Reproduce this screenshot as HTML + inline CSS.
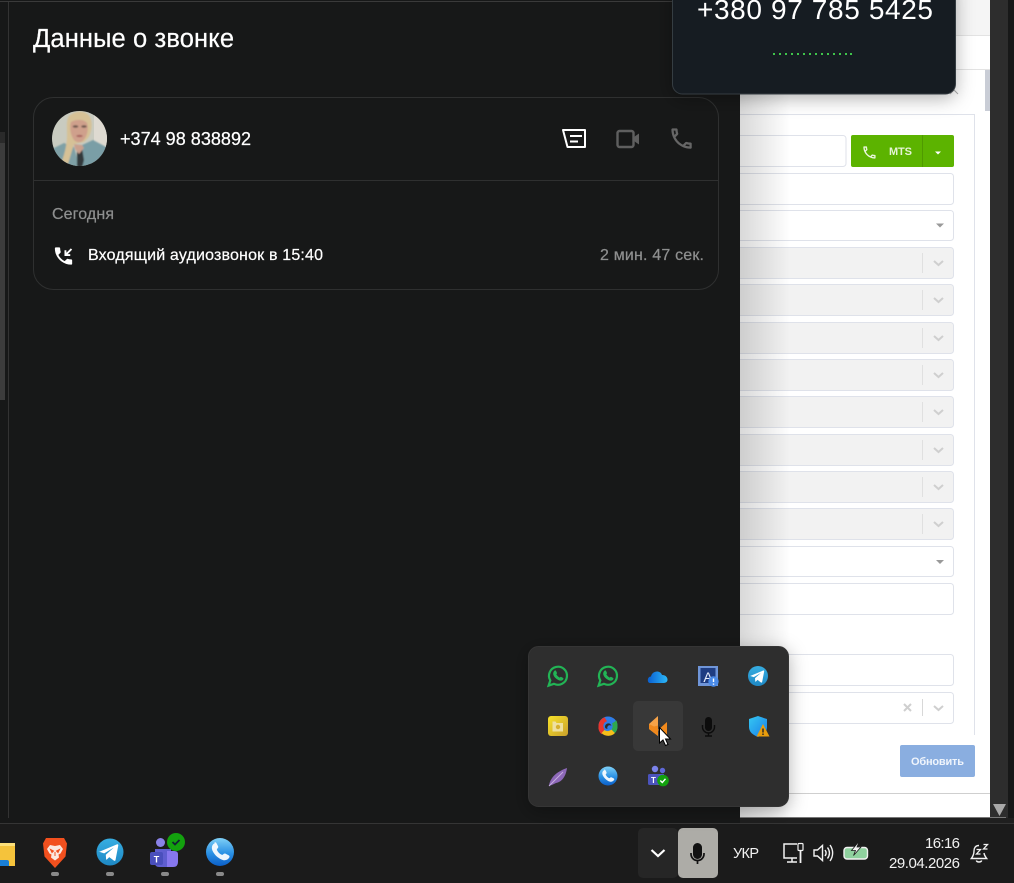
<!DOCTYPE html>
<html lang="ru"><head><meta charset="utf-8"><title>Данные о звонке</title>
<style>html,body{margin:0;padding:0;background:#171818;overflow:hidden}svg{display:block}text{font-family:"Liberation Sans",sans-serif}.w{stroke-width:.22;paint-order:stroke}</style></head>
<body>
<svg xmlns="http://www.w3.org/2000/svg" width="1014" height="883" viewBox="0 0 1014 883">
<defs>
<linearGradient id="sh" x1="0" x2="1" y1="0" y2="0"><stop offset="0" stop-color="#000" stop-opacity=".15"/><stop offset="1" stop-color="#000" stop-opacity="0"/></linearGradient>
<linearGradient id="tg" x1="0" x2="0" y1="0" y2="1"><stop offset="0" stop-color="#37aee2"/><stop offset="1" stop-color="#1e88c4"/></linearGradient>
<linearGradient id="ph" x1="0" x2="0" y1="0" y2="1"><stop offset="0" stop-color="#7fd0f7"/><stop offset=".55" stop-color="#2a90e4"/><stop offset="1" stop-color="#0b5fc8"/></linearGradient>
<linearGradient id="od" x1="0" x2="1" y1="0" y2="0"><stop offset="0" stop-color="#0a5fd0"/><stop offset="1" stop-color="#2cb8f8"/></linearGradient>
<linearGradient id="sd" x1="0" x2="1" y1="0" y2="1"><stop offset="0" stop-color="#35c8f2"/><stop offset="1" stop-color="#1a7ee8"/></linearGradient>
<linearGradient id="yl" x1="0" x2="1" y1="0" y2="1"><stop offset="0" stop-color="#f7e22a"/><stop offset="1" stop-color="#c9a02c"/></linearGradient>
<clipPath id="av"><circle cx="79.500" cy="138.500" r="27.500"/></clipPath>
<filter id="b1" x="-10%" y="-10%" width="120%" height="120%"><feGaussianBlur stdDeviation=".9"/></filter>
<filter id="pop" x="-20%" y="-30%" width="140%" height="170%"><feDropShadow dx="0" dy="4" stdDeviation="9" flood-color="#000" flood-opacity=".3"/></filter>
<g id="wa"><path d="M-9.400 9.600l1.700-5.200A9 9 0 1 1-4 7.800z" fill="none" stroke="#22b455" stroke-width="2.200"/><path d="M-3.800-5c.9-.9 1.600-.7 2 .2l.7 1.500c.2.500 0 1-.6 1.600.8 1.500 1.800 2.500 3.400 3.300.6-.6 1.100-.9 1.600-.6l1.500.8c.8.400.9 1.100.2 1.900-1.100 1.200-2.800 1.300-4.900.2C-2.200 2.700-3.800 1-4.600-1c-.5-1.600-.1-3 .8-4z" fill="#22b455"/></g>
<g id="tgi"><path d="M-6.500-.3L5.600-5.400c.6-.2 1 .1.900.8L4.700 4.900c-.1.700-.6.800-1.100.5L.5 3.100-1 4.600c-.3.300-.6.200-.6-.2L-1.800 1.500 3.600-3.300-2.900.6-6.400-.6z" fill="#fff"/></g>
<g id="phi"><path d="M-4.600-6.300c.7-.5 1.300-.4 1.700.3l1 1.900c.3.600.1 1.100-.6 1.800-.2.200-.2.500 0 .9.700 1.300 1.500 2.100 2.800 2.800.4.200.7.200.9 0 .7-.7 1.200-.9 1.800-.6l1.900 1c.7.400.8 1 .3 1.700-1.300 1.800-3.400 2-5.900.5-2.200-1.300-3.600-2.800-4.600-4.800-1.100-2.300-.7-4.400 1.700-5.500z" fill="#fff" fill-opacity=".92"/></g>
</defs>

<!-- Right application -->
<rect x="740" y="0" width="250" height="818" fill="#fff"/>
<rect x="740" y="0" width="250" height="35" fill="#f5f5f5"/>
<path d="M740 35.500H990M740 69.500H990" stroke="#e3e3e3"/>
<path d="M740 114.500H974.500V735" stroke="#dfe2ea" fill="none"/>
<rect x="985" y="70" width="5" height="41" fill="#c9cdd6"/>
<path d="M950 94l4-4 4 4" stroke="#aaa" fill="none"/>
<g fill="#fff" stroke="#dfe2ea">
<rect x="730" y="135.500" width="116" height="31" rx="3"/>
<rect x="730" y="173.500" width="223.500" height="31" rx="3"/>
<rect x="730" y="210.500" width="223.500" height="30" rx="3"/>
<g fill="#f2f2f2">
<rect x="730" y="247.500" width="223.500" height="31" rx="3"/>
<rect x="730" y="284.500" width="223.500" height="31" rx="3"/>
<rect x="730" y="322.500" width="223.500" height="31" rx="3"/>
<rect x="730" y="359.500" width="223.500" height="31" rx="3"/>
<rect x="730" y="396.500" width="223.500" height="31" rx="3"/>
<rect x="730" y="434.500" width="223.500" height="31" rx="3"/>
<rect x="730" y="471.500" width="223.500" height="31" rx="3"/>
<rect x="730" y="508.500" width="223.500" height="31" rx="3"/>
</g>
<rect x="730" y="546.500" width="223.500" height="30" rx="3"/>
<rect x="730" y="583.500" width="223.500" height="31" rx="3"/>
<rect x="730" y="654.500" width="223.500" height="31" rx="3"/>
<rect x="730" y="692.500" width="223.500" height="31" rx="3"/>
</g>
<path d="M922.500 253v20M922.500 290v20M922.500 328v20M922.500 365v20M922.500 402v20M922.500 440v20M922.500 477v20M922.500 514v20" stroke="#e0e0e0"/>
<g stroke="#cfcfcf" stroke-width="2" fill="none">
<path d="M934 261l4.500 4 4.500-4M934 298l4.500 4 4.500-4M934 336l4.500 4 4.500-4M934 373l4.500 4 4.500-4M934 410l4.500 4 4.500-4M934 448l4.500 4 4.500-4M934 485l4.500 4 4.500-4M934 522l4.500 4 4.500-4M934 706l4.500 4 4.500-4"/>
<path d="M904 704l7 7m0-7l-7 7"/>
</g>
<path d="M922.500 699v17" stroke="#d8d8d8"/>
<path d="M936 223.500h8l-4 4zM936 560h8l-4 4z" fill="#999"/>
<rect x="851" y="135" width="103" height="32" rx="2" fill="#5cb300"/>
<path d="M922.500 135v32" stroke="#4f9a00"/>
<path transform="translate(861.300,144.300) scale(.68)" d="M6.540 5c.060.890.210 1.760.450 2.590l-1.200 1.200c-.410-1.200-.670-2.470-.760-3.790h1.510m9.860 12.020c.850.240 1.720.390 2.600.450v1.490c-1.320-.090-2.590-.350-3.800-.750l1.200-1.190M7.500 3H4c-.550 0-1 .450-1 1 0 9.390 7.610 17 17 17 .550 0 1-.450 1-1v-3.490c0-.550-.450-1-1-1-1.240 0-2.450-.200-3.570-.570-.100-.040-.210-.050-.310-.050-.260 0-.510.100-.710.290l-2.200 2.200c-2.830-1.450-5.150-3.760-6.590-6.590l2.200-2.200c.280-.280.360-.670.250-1.020C8.700 6.450 8.500 5.250 8.500 4c0-.550-.450-1-1-1z" fill="#eaf6dc"/>
<text x="889" y="155" font-size="11" font-weight="700" fill="#e6f4d6" textLength="23">MTS</text>
<path d="M935 151.500h6l-3 3z" fill="#fff"/>
<rect x="900" y="745" width="75" height="32" rx="2" fill="#8aaee0"/>
<text x="937.500" y="765" font-size="11" font-weight="700" fill="#f0f5fc" text-anchor="middle" textLength="53">Обновить</text>
<path d="M740 793.500H990" stroke="#cfcfcf"/>
<rect x="740" y="0" width="50" height="818" fill="url(#sh)"/>
<rect x="990" y="0" width="18" height="818" fill="#2d2d2d"/>
<rect x="1008" y="0" width="6" height="823" fill="#171818"/>
<rect x="740" y="817" width="266" height="1.500" fill="#777"/>
<path d="M993 804h13l-6.500 12z" fill="#a8a8a8"/>

<!-- Dark panel -->
<rect x="0" y="0" width="740" height="823" fill="#171818"/>
<rect x="0" y="1" width="740" height="1" fill="#3a3a3a"/>
<rect x="8" y="2" width="1" height="821" fill="#333"/>
<rect x="0" y="132" width="5" height="11" fill="#2a2a2a"/>
<rect x="0" y="143" width="5" height="257" fill="#3c3c3c"/>
<text class="w" x="33" y="47" font-size="25.500" fill="#fff" stroke="#fff" textLength="201">Данные о звонке</text>
<rect x="33.500" y="97.500" width="685" height="192" rx="20" fill="#171818" stroke="#2f3030"/>
<path d="M34 180.500H718" stroke="#2f3030"/>

<!-- avatar -->
<g clip-path="url(#av)">
<rect x="52" y="111" width="55" height="55" fill="#c9cbc0"/>
<rect x="94" y="111" width="13" height="36" fill="#dedad1"/>
<g filter="url(#b1)">
<path d="M50 150l14-7 10 4 6 21H50z" fill="#7fa0a6"/>
<path d="M80 146l13-6 15 8v20H78z" fill="#7a9ea6"/>
<path d="M69 116c7-6 17-6 21 1 3 6 2 15-2 21l-4 4-10 2-6 20-6-3c3-9 5-17 5-26 0-8-1-14 2-19z" fill="#d6c196"/>
<path d="M71 122c5-3 13-3 16 1 2 6 0 13-3.500 17-3 3-6.500 3-9.500 0-3-4-5-12-3-18z" fill="#cfa08c"/>
<path d="M77 148h5l2 12-2 8h-5z" fill="#33373a"/>
<path d="M74 144l8 1 2 3-5 6-4-5z" fill="#c9a08e"/>
<ellipse cx="75.500" cy="126.500" rx="2.800" ry="1.200" fill="#6e564e"/><ellipse cx="84" cy="126.500" rx="2.800" ry="1.200" fill="#6e564e"/>
<ellipse cx="79.500" cy="136" rx="3.300" ry="1.100" fill="#a8645e"/>
</g>
</g>
<text class="w" x="120" y="145" font-size="18" fill="#fff" stroke="#fff" textLength="131">+374 98 838892</text>

<!-- actions -->
<path d="M563 130H585V147H567.500z" fill="none" stroke="#fff" stroke-width="2" stroke-linejoin="round"/>
<path d="M570 136H582M570 141.500H578" stroke="#fff" stroke-width="2"/>
<rect x="617.500" y="131" width="16" height="16" rx="2" fill="none" stroke="#5f5f5f" stroke-width="2.400"/>
<path d="M634 137l5-3.500v11l-5-3.500z" fill="#5f5f5f"/>
<path transform="translate(668,125) scale(1.130)" d="M6.540 5c.060.890.210 1.760.450 2.590l-1.200 1.200c-.410-1.200-.670-2.470-.760-3.790h1.510m9.860 12.020c.850.240 1.720.390 2.600.450v1.490c-1.320-.090-2.590-.350-3.800-.750l1.200-1.190M7.500 3H4c-.550 0-1 .450-1 1 0 9.390 7.610 17 17 17 .550 0 1-.450 1-1v-3.490c0-.550-.450-1-1-1-1.240 0-2.450-.200-3.570-.570-.100-.040-.210-.050-.310-.050-.260 0-.510.100-.710.290l-2.200 2.200c-2.830-1.450-5.150-3.760-6.590-6.590l2.200-2.200c.280-.280.360-.670.250-1.020C8.700 6.450 8.500 5.250 8.500 4c0-.550-.450-1-1-1z" fill="#666"/>

<text class="w" x="52" y="219" font-size="16" fill="#8e8f8f" stroke="#8e8f8f" textLength="62">Сегодня</text>
<path transform="translate(52,244.500) scale(.96)" d="M20 15.500c-1.250 0-2.450-.200-3.570-.570-.350-.110-.740-.030-1.020.240l-2.200 2.200c-2.830-1.440-5.150-3.750-6.590-6.590l2.200-2.210c.280-.260.360-.650.250-1C8.700 6.450 8.500 5.250 8.500 4c0-.550-.450-1-1-1H4c-.550 0-1 .450-1 1 0 9.390 7.610 17 17 17 .550 0 1-.450 1-1v-3.500c0-.550-.450-1-1-1zM21 5.400L19.600 4 15 8.600V6h-2v6h6v-2h-2.600z" fill="#fff"/>
<text class="w" x="88" y="260" font-size="16" fill="#fff" stroke="#fff" textLength="235">Входящий аудиозвонок в 15:40</text>
<text class="w" x="600" y="260" font-size="16" fill="#8e8f8f" stroke="#8e8f8f" textLength="104">2 мин. 47 сек.</text>

<!-- Call popup -->
<rect x="672.500" y="-20" width="283" height="114" rx="10" fill="#141a20" stroke="#363c42" filter="url(#pop)"/>
<text x="815" y="19" font-size="28" fill="#fff" text-anchor="middle" textLength="236">+380 97 785 5425</text>
<g fill="#3fc44c"><rect x="773" y="53" width="2" height="2"/><rect x="779" y="53" width="2" height="2"/><rect x="785" y="53" width="2" height="2"/><rect x="791" y="53" width="2" height="2"/><rect x="797" y="53" width="2" height="2"/><rect x="803" y="53" width="2" height="2"/><rect x="809" y="53" width="2" height="2"/><rect x="815" y="53" width="2" height="2"/><rect x="821" y="53" width="2" height="2"/><rect x="827" y="53" width="2" height="2"/><rect x="833" y="53" width="2" height="2"/><rect x="839" y="53" width="2" height="2"/><rect x="845" y="53" width="2" height="2"/><rect x="850" y="53" width="2" height="2"/></g>

<!-- Taskbar -->
<rect x="0" y="818" width="1014" height="65" fill="#1b1b1b"/>
<rect x="0" y="818" width="740" height="5" fill="#171818"/>
<rect x="740" y="818" width="274" height="5" fill="#1f1f1f"/>
<rect x="0" y="823" width="1014" height="1" fill="#353535"/>
<!-- folder -->
<path d="M0 843H15V866H0z" fill="#f5c33b"/><path d="M0 843H15V846H0z" fill="#fde07a"/><path d="M0 860H7q2 0 2 2v4H0z" fill="#1a7fd6"/>
<!-- brave -->
<path d="M46 838H64l3 5.500-1.500 13L55 868l-10.500-11.500-1.500-13z" fill="#f2501e"/>
<path d="M50 845l5 1 5-1 3 4-2.500 4.500-2 1 .5 3-4 3-4-3 .5-3-2-1-2.500-4.500z" fill="#fbe9e0"/>
<path d="M50.500 849.500l3 1.500-1.500 1.500zM59.500 849.500l-3 1.500 1.500 1.500zM55 852v4" stroke="#f2501e" fill="#f2501e"/>
<!-- telegram -->
<circle cx="110" cy="852" r="13.500" fill="url(#tg)"/>
<use href="#tgi" transform="translate(108.500,852.500) scale(1.500)"/>
<!-- teams -->
<circle cx="160.500" cy="842.500" r="4.500" fill="#8a82e8"/>
<path d="M155 849h16v14q0 4-4 4h-8q-4 0-4-4z" fill="#5f5ed0"/>
<path d="M167 851h7q4 0 4 3v8q0 5-5 5h-6z" fill="#8677ee"/>
<rect x="150" y="852" width="13" height="13" rx="2" fill="#4a4fbc"/>
<text x="156.500" y="862.500" font-size="9" font-weight="700" fill="#fff" text-anchor="middle">T</text>
<circle cx="176" cy="842" r="9" fill="#13a10e"/>
<path d="M172.500 842l2.500 2.500 4.500-4.500" fill="none" stroke="#123" stroke-width="1.800"/>
<!-- phone -->
<circle cx="220" cy="852" r="14" fill="url(#ph)"/>
<use href="#phi" transform="translate(221,852.500) scale(1.550)"/>
<g fill="#8a8a8a"><rect x="51" y="872" width="8" height="4" rx="2"/><rect x="106" y="872" width="8" height="4" rx="2"/><rect x="161" y="872" width="8" height="4" rx="2"/><rect x="216" y="872" width="8" height="4" rx="2"/></g>

<rect x="638" y="828" width="40" height="50" rx="5" fill="#262626"/>
<path d="M651.500 850l6.500 6 6.500-6" fill="none" stroke="#fff" stroke-width="2.200"/>
<rect x="678" y="828" width="40" height="50" rx="5" fill="#adaca7"/>
<rect x="693" y="843" width="9" height="16" rx="4.500" fill="#111"/>
<path d="M691 853v1a6.500 6.500 0 0 0 13 0v-1M697.500 861v3" fill="none" stroke="#111" stroke-width="1.700"/>
<text x="746" y="858" font-size="14.500" fill="#f2f2f2" text-anchor="middle" textLength="26">УКР</text>
<!-- network -->
<path d="M797 844H784V858H797M787 862H797M792 858V862" fill="none" stroke="#f2f2f2" stroke-width="1.500"/>
<rect x="798" y="843.500" width="5" height="7" rx="1" fill="none" stroke="#f2f2f2" stroke-width="1.200"/><path d="M800.500 850V863" stroke="#f2f2f2" stroke-width="1.800"/>
<!-- speaker -->
<path d="M814 850h3.500l5-4.500v15l-5-4.500H814z" fill="none" stroke="#f2f2f2" stroke-width="1.400"/>
<path d="M825 850c1.500 2 1.500 4 0 6M827.500 847.500c2.500 3.500 2.500 7.500 0 11M830 845c3.500 5 3.500 11 0 16" fill="none" stroke="#f2f2f2" stroke-width="1.400"/>
<!-- battery -->
<rect x="844" y="847.500" width="23.500" height="11.500" rx="3" fill="#8fd19e" stroke="#f2f2f2" stroke-width="1.400"/>
<path d="M858.500 842l-7 8.500h4l-2 5 7.500-8.500h-4l2-5z" fill="#f4f4f4" stroke="#1b1b1b" stroke-width=".8"/>
<text x="960" y="848" font-size="15" fill="#f2f2f2" text-anchor="end" textLength="35">16:16</text>
<text x="960" y="868" font-size="15" fill="#f2f2f2" text-anchor="end" textLength="71">29.04.2026</text>
<!-- bell -->
<path d="M979 845.500c-3.500 0-5 2.500-5 5.500 0 3-.8 5-2.700 7.500h15.400c-1.900-2.500-2.500-3.800-2.700-5.500M976.300 860.500c.7 2 4.700 2 5.400 0" fill="none" stroke="#f2f2f2" stroke-width="1.400"/>
<path d="M976.500 849.500h4l-4 4.500h4M983.500 844.500h4l-4 4.500h4" fill="none" stroke="#f2f2f2" stroke-width="1.300"/>

<!-- Tray flyout -->
<rect x="528.500" y="646.500" width="260" height="160" rx="10" fill="#2d2d2d" stroke="#353535" filter="url(#pop)"/>
<rect x="633" y="701" width="50" height="50" rx="5" fill="#383838"/>
<use href="#wa" transform="translate(558,676)"/>
<use href="#wa" transform="translate(608,676)"/>
<!-- onedrive -->
<path d="M650 683c-3 0-3-6.500 1-6.500 1-5.500 9-7 11-1.500 6-.5 8 8 1.500 8z" fill="url(#od)"/>
<!-- app A -->
<rect x="698" y="666" width="20" height="20" fill="#6f95d8"/><rect x="700.500" y="668" width="15" height="15" fill="#1f3d82"/>
<text x="708" y="682" font-size="14" fill="#e8eefc" text-anchor="middle">A</text>
<circle cx="713.500" cy="681.500" r="5.200" fill="#4a8be8"/><path d="M713.500 678.500v3.500M713.500 683.500v1.200" stroke="#fff" stroke-width="1.400"/>
<!-- telegram -->
<circle cx="758" cy="676" r="10" fill="url(#tg)"/><use href="#tgi" transform="translate(757,676.500) scale(1.100)"/>
<!-- yellow -->
<rect x="548" y="716" width="20" height="20" rx="3" fill="url(#yl)"/>
<path d="M552.500 721.500h3l1 1.500h6.500v8.500h-10.500z" fill="#eee0a0"/><circle cx="558" cy="727" r="2.200" fill="#d6b030"/>
<!-- screencast -->
<circle cx="608" cy="726" r="9.500" fill="#2e7de8"/>
<path d="M598.500 726a9.500 9.500 0 0 1 6-8.800l2.500 4a5 5 0 0 0-2.500 8l-3 5a9.500 9.500 0 0 1-3-8.200z" fill="#e8352e"/>
<path d="M601.500 733c3 3.500 10 4 13.500 0l-3.500-3.500c-2.500 2-5 2-7 .5z" fill="#f6bf1a"/>
<path d="M617.500 726a9.500 9.500 0 0 1-2.500 7l-3.500-3.500c1.500-2 1.500-4 .5-6l4.500-3c.6 1.500 1 3.500 1 5.500z" fill="#2fa84f"/>
<path d="M605 727c0-2.500 2-4 4-3.600 1.200.2 2 1.200 2.400 2.400-1.200-.8-2.800-.8-3.600.4-.6.800-.8 2-.2 2.800-1.500-.2-2.600-.8-2.600-2z" fill="#2c2c2c"/>
<!-- orange -->
<path d="M658 716v20l-9-7v-5z" fill="#f7a348"/>
<path d="M649 724l5 2.500 4-1V736l-9-7z" fill="#f0891e"/>
<path d="M667 722v14l-9-6z" fill="#f28a1c"/>
<!-- mic black -->
<rect x="705" y="717" width="7" height="14" rx="3.500" fill="#0c0c0c"/>
<path d="M702.500 725v2a6 6 0 0 0 12 0v-2M708.500 733v3M705 736h7" fill="none" stroke="#0c0c0c" stroke-width="1.400"/>
<!-- shield -->
<path d="M749 719c3-1 6-2 9-3 3 1 6 2 9 3v8c0 5-4 8-9 10-5-2-9-5-9-10z" fill="url(#sd)"/>
<path d="M763 724l-6.500 12.500h13z" fill="#e89c0c"/><path d="M763 728.500v4M763 733.500v1.500" stroke="#222" stroke-width="1.400"/>
<!-- feather -->
<path d="M549 786c1-9 9-15 18-18-1 8-5 14-11 15-2 1-4 2-7 3z" fill="#8d68b8"/><path d="M549 786l14-14" stroke="#c6aee0" stroke-width="1"/>
<!-- phone tray -->
<circle cx="608" cy="776" r="9.500" fill="url(#ph)"/><use href="#phi" transform="translate(608.500,776.500) scale(1.050)"/>
<!-- teams tray -->
<circle cx="655" cy="769" r="3.200" fill="#7b83eb"/><circle cx="662.500" cy="770.500" r="2.700" fill="#5f68d8"/>
<path d="M650 774h14v9q0 2-2 2h-10q-2 0-2-2z" fill="#5059c9"/>
<rect x="648" y="774" width="11" height="11" rx="1.500" fill="#4b53bc"/>
<text x="653.500" y="783" font-size="8" font-weight="700" fill="#fff" text-anchor="middle">T</text>
<circle cx="663" cy="780.500" r="5.800" fill="#13a10e"/><path d="M660.300 780.500l2 2 3.200-3.700" fill="none" stroke="#fff" stroke-width="1.400"/>
<!-- cursor -->
<path d="M659.500 727.500V743l3.500-3 2.500 5.500 2.500-1-2.500-5.500h5z" fill="#fff" stroke="#000" stroke-width="1"/>
</svg>
</body></html>
